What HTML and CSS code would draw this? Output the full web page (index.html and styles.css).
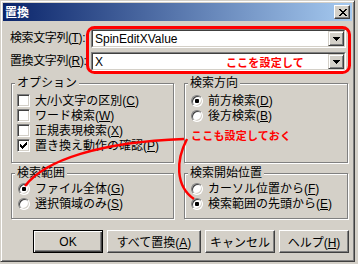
FILE: index.html
```html
<!DOCTYPE html>
<html lang="ja">
<head>
<meta charset="utf-8">
<title>置換</title>
<link rel="stylesheet" href="styles.css">
</head>
<body>
<div class="window">
  <div class="titlebar">
    <span class="title">置換</span>
    <span class="caption-btn">
      <svg class="px" width="8" height="7" viewBox="0 0 8 7"><path d="M0 0h2v1H0zM6 0h2v1H6zM1 1h2v1H1zM5 1h2v1H5zM2 2h4v1H2zM3 3h2v1H3zM2 4h4v1H2zM1 5h2v1H1zM5 5h2v1H5zM0 6h2v1H0zM6 6h2v1H6z" fill="#000"/></svg>
    </span>
  </div>
  <div class="client">
    <div class="fields">
      <span class="label">検索文字列(<u>T</u>):</span>
      <div class="combo"><div class="combo-inner">
        <span class="combo-value">SpinEditXValue</span>
        <span class="drop"><svg class="px" width="7" height="4" viewBox="0 0 7 4"><path d="M0 0h7v1H0zM1 1h5v1H1zM2 2h3v1H2zM3 3h1v1H3z" fill="#000"/></svg></span>
      </div></div>
      <span class="label">置換文字列(<u>R</u>):</span>
      <div class="combo"><div class="combo-inner">
        <span class="combo-value">X</span>
        <span class="note note-field">ここを設定して</span>
        <span class="drop"><svg class="px" width="7" height="4" viewBox="0 0 7 4"><path d="M0 0h7v1H0zM1 1h5v1H1zM2 2h3v1H2zM3 3h1v1H3z" fill="#000"/></svg></span>
      </div></div>
    </div>

    <div class="groups">
      <div class="group">
        <div class="group-title">オプション</div>
        <div class="rows rows-top">
          <div class="row"><span class="check"></span>大/小文字の区別(<u>C</u>)</div>
          <div class="row"><span class="check"></span>ワード検索(<u>W</u>)</div>
          <div class="row"><span class="check"></span>正規表現検索(<u>X</u>)</div>
          <div class="row"><span class="check"><svg class="px" width="7" height="7" viewBox="0 0 7 7"><path d="M6 0h1v1H6zM5 1h2v1H5zM0 2h1v1H0zM4 2h3v1H4zM0 3h2v1H0zM3 3h3v1H3zM0 4h5v1H0zM1 5h3v1H1zM2 6h1v1H2z" fill="#000"/></svg></span>置き換え動作の確認(<u>P</u>)</div>
        </div>
      </div>
      <div class="group">
        <div class="group-title">検索方向</div>
        <div class="rows rows-top">
          <div class="row row-radio"><span class="radio on"></span>前方検索(<u>D</u>)</div>
          <div class="row row-radio"><span class="radio"></span>後方検索(<u>B</u>)</div>
          <div class="note note-group">ここも設定しておく</div>
        </div>
      </div>
      <div class="group">
        <div class="group-title">検索範囲</div>
        <div class="rows rows-bottom">
          <div class="row row-radio"><span class="radio on"></span>ファイル全体(<u>G</u>)</div>
          <div class="row row-radio"><span class="radio"></span>選択領域のみ(<u>S</u>)</div>
        </div>
      </div>
      <div class="group">
        <div class="group-title">検索開始位置</div>
        <div class="rows rows-bottom">
          <div class="row row-radio"><span class="radio"></span>カーソル位置から(<u>F</u>)</div>
          <div class="row row-radio"><span class="radio on"></span>検索範囲の先頭から(<u>E</u>)</div>
        </div>
      </div>
    </div>

    <div class="buttons">
      <button class="btn btn-default">OK</button>
      <button class="btn btn-wide">すべて置換(<u>A</u>)</button>
      <button class="btn">キャンセル</button>
      <button class="btn">ヘルプ(<u>H</u>)</button>
    </div>
  </div>

  <svg class="annot" width="358" height="264" viewBox="0 0 358 264">
    <rect x="87.5" y="27.5" width="262" height="45" rx="7" ry="7" fill="none" stroke="#ff0000" stroke-width="3"/>
    <path d="M25 186 C45 160 100 142 184 139" fill="none" stroke="#ff0000" stroke-width="2.5"/>
    <path d="M187 139 C176 160 175 186 194 199" fill="none" stroke="#ff0000" stroke-width="2.5"/>
  </svg>
</div>
</body>
</html>
```

FILE: styles.css
```css
* {
  box-sizing: border-box;
}

html,
body {
  margin: 0;
  padding: 0;
}

body {
  width: 358px;
  height: 264px;
  overflow: hidden;
  background: #d4d0c8;
  font-family: "Liberation Sans", "Noto Sans CJK JP", sans-serif;
  font-size: 12px;
  color: #000;
}

.px {
  display: block;
  shape-rendering: crispEdges;
}

u {
  text-decoration: underline;
  text-underline-offset: 1px;
}

.window {
  position: relative;
  width: 355px;
  height: 262px;
  background: #d4d0c8;
  border: 1px solid;
  border-color: #d4d0c8 #404040 #404040 #d4d0c8;
  box-shadow: inset 1px 1px 0 #ffffff, inset -1px -1px 0 #808080;
  padding: 2px;
}

.titlebar {
  height: 18px;
  display: flex;
  align-items: center;
  justify-content: space-between;
  padding: 0 2px 0 2px;
  background: linear-gradient(to right, #0a246a, #a6caf0);
}

.title {
  color: #fff;
  font-family: "Noto Sans CJK JP", sans-serif;
  font-weight: bold;
  font-size: 12px;
  line-height: 14px;
}

.caption-btn {
  width: 16px;
  height: 14px;
  display: flex;
  align-items: center;
  justify-content: center;
  background: #d4d0c8;
  border: 1px solid;
  border-color: #ffffff #404040 #404040 #ffffff;
  box-shadow: inset -1px -1px 0 #808080;
  padding-left: 1px;
}

.client {
  padding: 8px 0 0 7px;
}

.fields {
  display: grid;
  grid-template-columns: 81px 255px;
  grid-auto-rows: 19px;
  row-gap: 4px;
}

.label {
  align-self: center;
  line-height: 14px;
  padding-bottom: 2px;
  letter-spacing: -0.4px;
  white-space: nowrap;
}

.combo {
  border: 1px solid;
  border-color: #808080 #ffffff #ffffff #808080;
}

.combo-inner {
  height: 100%;
  display: flex;
  align-items: center;
  background: #fff;
  border: 1px solid;
  border-color: #404040 #d4d0c8 #d4d0c8 #404040;
}

.combo-value {
  flex: 1;
  padding-left: 2px;
  line-height: 14px;
  white-space: nowrap;
}

.drop {
  width: 16px;
  height: 15px;
  display: flex;
  align-items: center;
  justify-content: center;
  background: #d4d0c8;
  border: 1px solid;
  border-color: #d4d0c8 #404040 #404040 #d4d0c8;
  box-shadow: inset 1px 1px 0 #ffffff, inset -1px -1px 0 #808080;
  padding-top: 1px;
}

.note {
  color: #ff0000;
  font-family: "Noto Sans CJK JP", sans-serif;
  font-weight: bold;
  font-size: 11px;
  letter-spacing: 0.2px;
  line-height: 14px;
  white-space: nowrap;
}

.note-field {
  margin-right: 24px;
}

.note-group {
  margin-top: 5px;
  height: 14px;
  padding-left: 6px;
}

.groups {
  margin: 12px 0 0 1px;
  display: grid;
  grid-template-columns: 163px 164px;
  grid-template-rows: 80px 46px;
  gap: 10px;
}

.group {
  border: 1px solid #808080;
  box-shadow: inset 1px 1px 0 #ffffff, 1px 1px 0 #ffffff;
}

.group-title {
  width: fit-content;
  height: 14px;
  line-height: 14px;
  margin: -8px 0 0 3px;
  padding: 0 2px;
  background: #d4d0c8;
  white-space: nowrap;
}

.rows-top {
  margin-top: 3px;
}

.rows-bottom {
  margin-top: 1px;
}

.row {
  height: 15px;
  display: flex;
  align-items: center;
  padding-left: 5px;
  line-height: 14px;
  white-space: nowrap;
}

.row-radio {
  padding-left: 6px;
}

.check {
  width: 13px;
  height: 13px;
  flex: none;
  margin-right: 5px;
  display: flex;
  align-items: center;
  justify-content: center;
  background: #fff;
  border: 1px solid;
  border-color: #808080 #ffffff #ffffff #808080;
  box-shadow: inset 1px 1px 0 #404040, inset -1px -1px 0 #d4d0c8;
}

.radio {
  position: relative;
  width: 12px;
  height: 12px;
  flex: none;
  margin-right: 5px;
  border-radius: 50%;
  background: #fff;
  border: 1px solid;
  border-color: #808080 #ffffff #ffffff #808080;
  box-shadow: inset 1px 1px 0 #404040, inset -1px -1px 0 #d4d0c8;
}

.radio.on::after {
  content: "";
  position: absolute;
  left: 3px;
  top: 3px;
  width: 4px;
  height: 4px;
  border-radius: 1px;
  background: #000;
}

.buttons {
  margin: 11px 0 0 23px;
  display: flex;
  gap: 4px;
}

.btn {
  width: 70px;
  height: 23px;
  padding: 0;
  font-family: "Liberation Sans", "Noto Sans CJK JP", sans-serif;
  font-size: 12px;
  color: #000;
  background: #d4d0c8;
  border: 1px solid;
  border-color: #ffffff #404040 #404040 #ffffff;
  box-shadow: inset -1px -1px 0 #808080;
  white-space: nowrap;
}

.btn-wide {
  width: 94px;
}

.btn-default {
  border: 1px solid #000;
  box-shadow: inset 1px 1px 0 #ffffff, inset -1px -1px 0 #404040, inset -2px -2px 0 #808080;
}

.annot {
  position: absolute;
  left: -1px;
  top: -1px;
  pointer-events: none;
}
```
